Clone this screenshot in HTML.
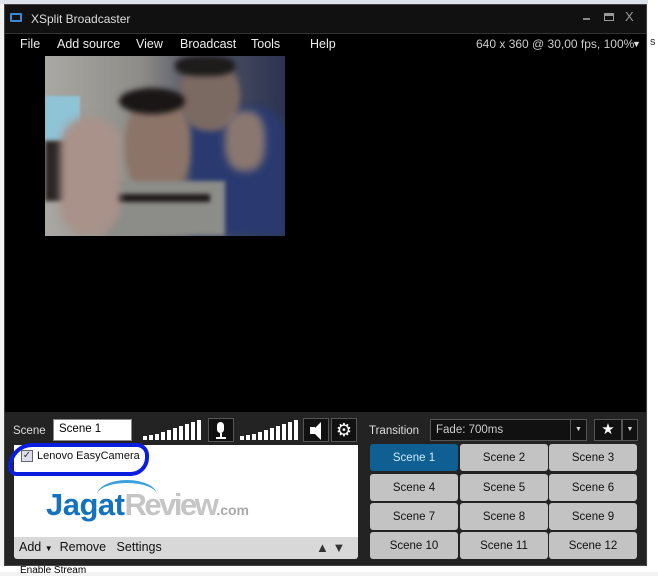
<!DOCTYPE html>
<html><head><meta charset="utf-8"><style>
*{margin:0;padding:0;box-sizing:border-box}
body{width:658px;height:572px;background:#f2f2f2;position:relative;overflow:hidden;font-family:"Liberation Sans",sans-serif;font-size:12px}
.a{position:absolute}
.win{left:4px;top:4px;width:643px;height:562px;background:#000;border:1px solid #444}
.title{left:0;top:0;width:641px;height:28px;background:#111;color:#ddd;font-size:12px}
.menu span{position:absolute;top:37px;color:#eee;font-size:12.5px}
.btn{position:absolute;background:#c3c3c3;border-radius:3px;color:#111;font-size:11.5px;text-align:center;line-height:29px;width:88px;height:27px}
.bars i{position:absolute;bottom:0;width:4px;background:#fff}
.ib{position:absolute;background:#111;border:1px solid #555}
</style></head><body>
<div class="a" style="left:0;top:0;width:658px;height:4px;background:#dde2ea"></div>
<div class="a" style="left:0;top:566px;width:658px;height:6px;background:#fff"></div>
<div class="a" style="left:20px;top:565px;color:#000;font-size:10px">Enable Stream</div>
<div class="a" style="left:648px;top:0;width:10px;height:572px;background:#fff"></div>
<div class="a" style="left:650px;top:36px;font-size:11px;color:#333">s</div>
<div class="a win">
 <div class="a title">
  <div class="a" style="left:5px;top:8px;width:12px;height:9px;border:2px solid #3a8ad0;border-radius:1px"></div>
  <div class="a" style="left:26px;top:7px">XSplit Broadcaster</div>
  <div class="a" style="left:578px;top:13px;width:7px;height:2px;background:#888"></div>
  <div class="a" style="left:599px;top:8px;width:10px;height:8px;border:1px solid #999;border-top:3px solid #999"></div>
  <div class="a" style="left:620px;top:4px;color:#999;font-size:13px">X</div>
 </div>
 <div class="a" style="left:0;top:28px;width:641px;height:1px;background:#333"></div>
</div>
<div class="menu">
 <span style="left:20px">File</span><span style="left:57px">Add source</span><span style="left:136px">View</span><span style="left:180px">Broadcast</span><span style="left:251px">Tools</span><span style="left:310px">Help</span>
 <span style="left:476px;color:#ccc;font-size:12px">640 x 360 @ 30,00 fps, 100%</span>
 <span style="left:632px;top:39px;font-size:9px;color:#ddd">▼</span>
</div>
<!-- webcam -->
<div class="a" style="left:45px;top:56px;width:240px;height:180px;overflow:hidden;background:#9a9690">
 <div class="a" style="left:0;top:0;width:240px;height:180px;background:linear-gradient(90deg,#a9a8a3 0%,#8e8c87 40%,#5a5c6a 60%,#2c3350 100%)"></div>
 <div class="a" style="left:0;top:40px;width:35px;height:45px;background:#8fc3d6;filter:blur(1px)"></div>
 <div class="a" style="left:0;top:85px;width:30px;height:60px;background:#2a2624;filter:blur(2px)"></div>
 <div class="a" style="left:145px;top:50px;width:95px;height:130px;background:#2a3a70;border-radius:30px 30px 0 0;filter:blur(4px)"></div>
 <div class="a" style="left:135px;top:5px;width:60px;height:70px;background:#7b6a62;border-radius:45%;filter:blur(3px)"></div>
 <div class="a" style="left:130px;top:0;width:60px;height:20px;background:#1e1b1b;border-radius:40%;filter:blur(3px)"></div>
 <div class="a" style="left:80px;top:40px;width:65px;height:100px;background:#8c7468;border-radius:45%;filter:blur(3px)"></div>
 <div class="a" style="left:74px;top:32px;width:66px;height:26px;background:#1a1616;border-radius:50%;filter:blur(3px)"></div>
 <div class="a" style="left:60px;top:125px;width:120px;height:55px;background:#8c8c88;filter:blur(2px)"></div>
 <div class="a" style="left:70px;top:138px;width:95px;height:8px;background:#201c1c;filter:blur(2px)"></div>
 <div class="a" style="left:15px;top:60px;width:60px;height:120px;background:#a8928a;border-radius:30px;filter:blur(4px)"></div>
 <div class="a" style="left:180px;top:55px;width:40px;height:60px;background:#8a7870;border-radius:40%;filter:blur(4px)"></div>
</div>
<!-- bottom panel -->
<div class="a" style="left:5px;top:412px;width:641px;height:153px;background:#232323"></div>
<div class="a" style="left:13px;top:425px;color:#ddd;font-size:11.5px">Scene</div>
<div class="a" style="left:53px;top:419px;width:79px;height:22px;background:#fff;border:1px solid #888;padding:3px 5px;font-size:11.5px">Scene 1</div>
<div class="a bars" style="left:143px;top:420px;width:60px;height:20px">
 <i style="left:0;height:4px"></i><i style="left:6px;height:5px"></i><i style="left:12px;height:6px"></i><i style="left:18px;height:8px"></i><i style="left:24px;height:10px"></i><i style="left:30px;height:12px"></i><i style="left:36px;height:14px"></i><i style="left:42px;height:16px"></i><i style="left:48px;height:18px"></i><i style="left:54px;height:20px"></i>
</div>
<div class="ib" style="left:208px;top:418px;width:26px;height:24px"><div class="a" style="left:8px;top:3px;width:7px;height:11px;background:#fff;border-radius:4px"></div><div class="a" style="left:11px;top:14px;width:2px;height:5px;background:#fff"></div><div class="a" style="left:7px;top:18px;width:10px;height:2px;background:#fff"></div></div>
<div class="a bars" style="left:240px;top:420px;width:60px;height:20px">
 <i style="left:0;height:4px"></i><i style="left:6px;height:5px"></i><i style="left:12px;height:6px"></i><i style="left:18px;height:8px"></i><i style="left:24px;height:10px"></i><i style="left:30px;height:12px"></i><i style="left:36px;height:14px"></i><i style="left:42px;height:16px"></i><i style="left:48px;height:18px"></i><i style="left:54px;height:20px"></i>
</div>
<div class="ib" style="left:303px;top:418px;width:26px;height:24px"><div class="a" style="left:6px;top:8px;width:5px;height:7px;background:#fff"></div><div class="a" style="left:8px;top:3px;width:0;height:0;border-top:9px solid transparent;border-bottom:9px solid transparent;border-right:9px solid #fff"></div></div>
<div class="ib" style="left:331px;top:418px;width:26px;height:24px;color:#fff;font-size:18px;text-align:center;line-height:22px">⚙</div>
<!-- sources list -->
<div class="a" style="left:14px;top:445px;width:344px;height:92px;background:#fff"></div>
<div class="a" style="left:21px;top:450px;width:12px;height:12px;border:1px solid #666;background:#dde;font-size:10px;line-height:10px;text-align:center;color:#334">✓</div>
<div class="a" style="left:37px;top:450px;font-size:11px;color:#111">Lenovo EasyCamera</div>
<div class="a" style="left:8px;top:443px;width:141px;height:33px;border:4px solid #0a1ee0;border-radius:40px 20px 30px 14px"></div>
<div class="a" style="left:46px;top:487px;font-size:31px;font-weight:bold;letter-spacing:-0.5px;color:#1573be;white-space:nowrap">Jagat<span style="color:#c5c5c5;letter-spacing:-2.5px">Review</span><span style="font-size:14px;color:#aaa;letter-spacing:0">.com</span></div>
<div class="a" style="left:97px;top:480px;width:60px;height:30px;border-top:3px solid #3aa0dc;border-radius:50%"></div>
<div class="a" style="left:14px;top:537px;width:344px;height:22px;background:#d8d8d8;border-radius:0 0 3px 3px"></div>
<div class="a" style="left:19px;top:540px;font-size:12.5px;color:#111">Add <span style="font-size:8px">▼</span>&nbsp; Remove &nbsp; Settings</div>
<div class="a" style="left:316px;top:540px;font-size:13px;color:#333">▲ ▼</div>
<!-- transition -->
<div class="a" style="left:369px;top:425px;color:#ddd;font-size:11.5px">Transition</div>
<div class="a" style="left:430px;top:419px;width:157px;height:22px;background:#111;border:1px solid #555;color:#ccc;padding:4px 5px;font-size:11.5px">Fade: 700ms</div>
<div class="ib" style="left:570px;top:419px;width:17px;height:22px;color:#ddd;font-size:7px;text-align:center;line-height:20px">▼</div>
<div class="ib" style="left:594px;top:419px;width:28px;height:22px;color:#fff;font-size:15px;text-align:center;line-height:20px">★</div>
<div class="ib" style="left:622px;top:419px;width:16px;height:22px;color:#ddd;font-size:7px;text-align:center;line-height:20px">▼</div>
<div class="btn" style="left:370px;top:444px;background:#0f5f92;color:#cfe9ff">Scene 1</div>
<div class="btn" style="left:460px;top:444px">Scene 2</div>
<div class="btn" style="left:549px;top:444px">Scene 3</div>
<div class="btn" style="left:370px;top:474px">Scene 4</div>
<div class="btn" style="left:460px;top:474px">Scene 5</div>
<div class="btn" style="left:549px;top:474px">Scene 6</div>
<div class="btn" style="left:370px;top:503px">Scene 7</div>
<div class="btn" style="left:460px;top:503px">Scene 8</div>
<div class="btn" style="left:549px;top:503px">Scene 9</div>
<div class="btn" style="left:370px;top:532px">Scene 10</div>
<div class="btn" style="left:460px;top:532px">Scene 11</div>
<div class="btn" style="left:549px;top:532px">Scene 12</div>
</body></html>
